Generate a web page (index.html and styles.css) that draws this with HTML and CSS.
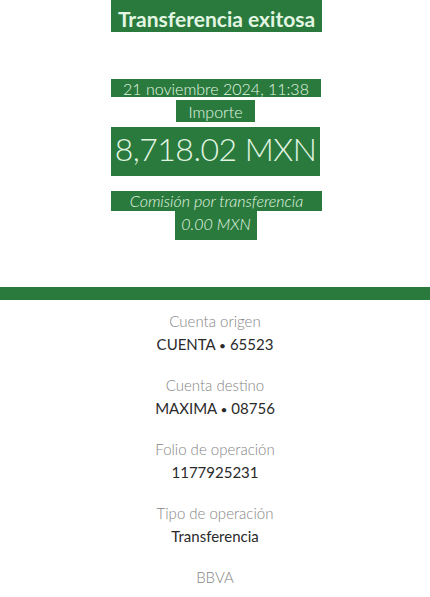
FILE: index.html
```html
<!DOCTYPE html>
<html lang="es">
<head>
<meta charset="utf-8">
<title>Transferencia exitosa</title>
<link rel="stylesheet" href="styles.css">
</head>
<body>
<main class="receipt">
  <section class="hero">
    <h1 class="hl title">Transferencia exitosa</h1>
    <p class="hl date">21 noviembre 2024, 11:38</p>
    <p class="hl label-amount">Importe</p>
    <p class="hl amount">8,718.02 MXN</p>
    <p class="hl fee-label">Comisión por transferencia</p>
    <p class="hl fee">0.00 MXN</p>
  </section>
  <div class="bar"></div>
  <section class="details">
    <div class="item">
      <span class="item-label">Cuenta origen</span>
      <span class="item-value">CUENTA <span class="dot">•</span> 65523</span>
    </div>
    <div class="item">
      <span class="item-label">Cuenta destino</span>
      <span class="item-value">MAXIMA <span class="dot">•</span> 08756</span>
    </div>
    <div class="item">
      <span class="item-label">Folio de operación</span>
      <span class="item-value">1177925231</span>
    </div>
    <div class="item">
      <span class="item-label">Tipo de operación</span>
      <span class="item-value">Transferencia</span>
    </div>
    <div class="item">
      <span class="item-label">BBVA</span>
    </div>
  </section>
</main>
</body>
</html>
```

FILE: styles.css
```css
* { box-sizing: border-box; }
html, body { margin: 0; padding: 0; background: #ffffff; }
body {
  font-family: Lato, "Open Sans", "Liberation Sans", sans-serif;
  width: 430px;
  height: 597px;
  overflow: hidden;
}
.receipt { display: flex; flex-direction: column; }

.hero {
  display: flex;
  flex-direction: column;
  align-items: center;
}
.hl {
  margin: 0;
  background: #2a7a3d;
  color: #e2f6e3;
  white-space: nowrap;
  text-align: center;
}
.title {
  width: 211px;
  height: 32px;
  line-height: 38px;
  font-size: 21px;
  font-weight: 700;
  margin-left: 3px;
}
.date {
  margin-top: 47px;
  width: 210px;
  height: 18px;
  line-height: 19px;
  font-size: 16px;
  font-weight: 300;
  margin-left: 2px;
}
.label-amount {
  margin-top: 3px;
  width: 79px;
  height: 22px;
  line-height: 24px;
  font-size: 16px;
  font-weight: 300;
  margin-left: 1px;
}
.amount {
  margin-top: 5px;
  width: 209px;
  height: 49px;
  line-height: 44px;
  font-size: 32px;
  font-weight: 300;
  letter-spacing: -0.5px;
  margin-left: 1px;
}
.fee-label {
  margin-top: 15px;
  width: 211px;
  height: 20px;
  line-height: 20px;
  font-size: 16px;
  font-weight: 300;
  font-style: italic;
  margin-left: 3px;
}
.fee {
  width: 82px;
  height: 29px;
  line-height: 26px;
  font-size: 16px;
  font-weight: 300;
  font-style: italic;
  margin-left: 2px;
}

.bar {
  margin-top: 47px;
  height: 13px;
  background: #2a7a3d;
}

.details {
  display: flex;
  flex-direction: column;
  align-items: center;
  gap: 19px;
  padding-top: 10px;
}
.item {
  display: flex;
  flex-direction: column;
  align-items: center;
  gap: 1px;
}
.item-label {
  height: 22px;
  line-height: 22px;
  font-size: 15px;
  font-weight: 300;
  color: #858585;
}
.item-value {
  height: 22px;
  line-height: 22px;
  font-size: 15px;
  font-weight: 400;
  color: #2a2a2a;
}
.dot {
  font-size: 12px;
  line-height: 1;
}
```
